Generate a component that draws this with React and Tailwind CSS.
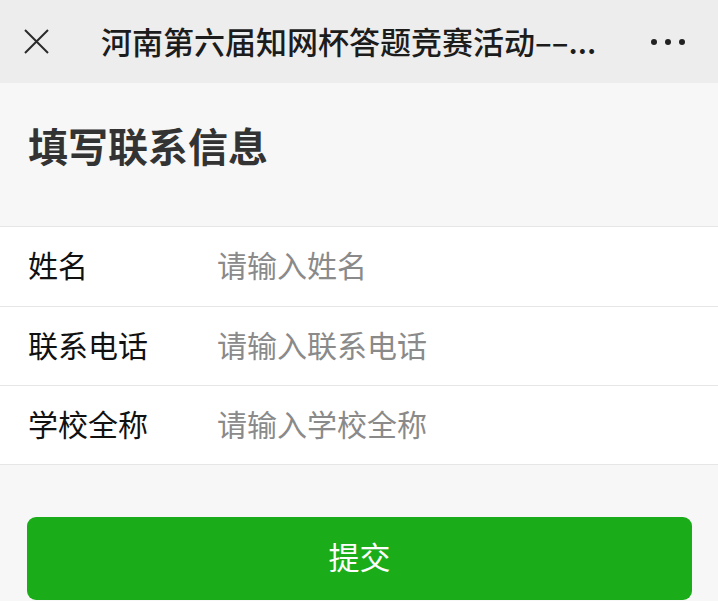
const fields = [
  { label: "姓名", placeholder: "请输入姓名" },
  { label: "联系电话", placeholder: "请输入联系电话" },
  { label: "学校全称", placeholder: "请输入学校全称" },
];

export default function App() {
  return (
    <div
      className="min-h-[601px] bg-[#f7f7f7]"
      style={{ fontFamily: '"Noto Sans CJK SC", "Noto Sans", sans-serif' }}
    >
      {/* top bar */}
      <div className="flex h-[83px] items-center bg-[#ededed] pb-[3px]">
        <div className="flex w-[101px] pl-[24px] pt-[3px]">
          <svg width="25" height="25" viewBox="0 0 25 25" fill="none">
            <path d="M1 1L24 24M24 1L1 24" stroke="#2a2a2a" strokeWidth="2" />
          </svg>
        </div>
        <div className="flex-1 whitespace-nowrap text-[31px] font-medium leading-none text-[#1c1c1c]">
          河南第六届知网杯答题竞赛活动––...
        </div>
        <div className="flex gap-[8px] pr-[33px] pt-[3px]">
          <span className="h-[6px] w-[6px] rounded-full bg-[#222]" />
          <span className="h-[6px] w-[6px] rounded-full bg-[#222]" />
          <span className="h-[6px] w-[6px] rounded-full bg-[#222]" />
        </div>
      </div>

      {/* heading */}
      <div className="flex h-[143px] items-center px-[28px] pb-[20px]">
        <h1 className="text-[40px] font-bold leading-none text-[#333]">
          填写联系信息
        </h1>
      </div>

      {/* form */}
      <div className="border-y border-[#e6e6e6] bg-white">
        {fields.map((f, i) => (
          <div
            key={f.label}
            className={`flex h-[79px] items-center pb-[5px] ${
              i > 0 ? "border-t border-[#e6e6e6]" : ""
            }`}
          >
            <label className="w-[217px] pl-[28px] text-[30px] leading-none text-[#111]">
              {f.label}
            </label>
            <input
              placeholder={f.placeholder}
              className="flex-1 bg-transparent text-[30px] leading-none text-[#111] outline-none placeholder:text-[#8a8a8a]"
            />
          </div>
        ))}
      </div>

      {/* submit */}
      <div className="pl-[27px] pr-[26px] pt-[52px]">
        <button className="flex h-[83px] w-full items-center justify-center rounded-[9px] bg-[#1aad19] pb-[7px] text-[31px] leading-none text-white">
          提交
        </button>
      </div>
    </div>
  );
}
